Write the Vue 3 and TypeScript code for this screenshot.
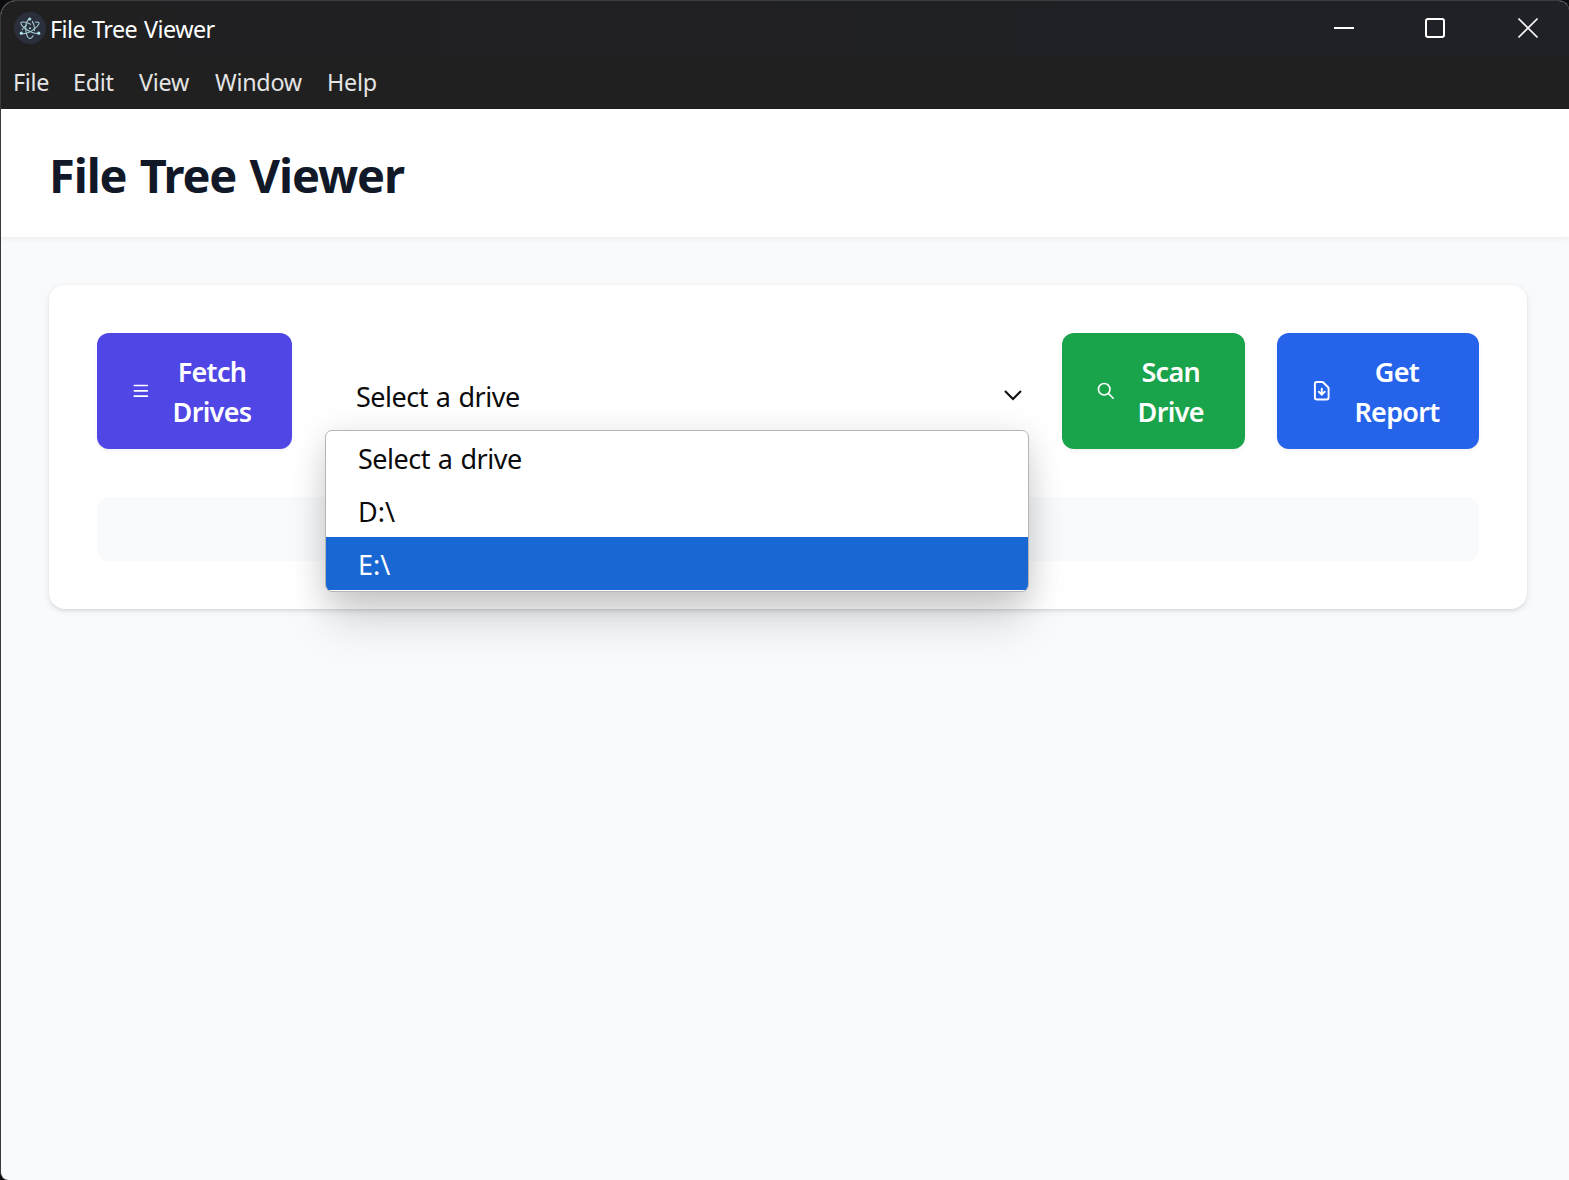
<script setup lang="ts">
import { ref } from 'vue'

const menus = ['File', 'Edit', 'View', 'Window', 'Help']
const options = ['Select a drive', 'D:\\', 'E:\\']
const selected = ref(options[0])
const highlighted = ref(2)
</script>

<template>
  <div class="window">
    <div class="titlebar">
      <svg class="app-icon" viewBox="0 0 32 32" width="32" height="32">
        <circle cx="16" cy="16" r="16" fill="#2b2e3b" />
        <g fill="none" stroke="#a4cfd8" stroke-width="1.05" stroke-linecap="round">
          <path d="M7.3 21.2C10 22.6 16 20.5 20 17.3C24 14 26.3 11 24.3 10.3C23.6 10 22.6 10 21.4 10.3" />
          <path d="M24.7 21.2C22 22.2 15 19.8 11 16.5C7.4 13.5 5.8 11 7.6 10.2C9.3 9.6 13 10.4 16.6 12.2" />
          <path d="M15.7 7C13 8 11.5 12.5 11.7 17C11.9 22 13.6 26.6 16 26.6C17.2 26.6 18.2 25.6 19 23.8" />
          <path d="M18.3 9.2C19.8 11.5 20.6 14.5 20.4 18.5" />
          <path d="M8.2 17.8C9 16 10.5 14.4 12.6 12.8" />
        </g>
        <g fill="#a9e0e8">
          <circle cx="16" cy="16.2" r="1" />
          <circle cx="15.7" cy="7" r="1.6" />
          <circle cx="7.3" cy="21.2" r="1.6" />
          <circle cx="24.7" cy="21.2" r="1.6" />
        </g>
      </svg>
      <span class="title">File Tree Viewer</span>
      <div class="controls">
        <svg width="20" height="20" viewBox="0 0 20 20"><path d="M0 10h20" stroke="#fff" stroke-width="2" /></svg>
        <svg width="20" height="20" viewBox="0 0 20 20"><rect x="1" y="1" width="18" height="18" rx="2" fill="none" stroke="#fff" stroke-width="2" /></svg>
        <svg width="20" height="20" viewBox="0 0 20 20"><path d="M.5.5l19 19M19.5.5l-19 19" stroke="#f2f2f2" stroke-width="1.6" /></svg>
      </div>
    </div>
    <nav class="menubar">
      <span v-for="m in menus" :key="m">{{ m }}</span>
    </nav>
    <header class="header"><h1>File Tree Viewer</h1></header>
    <main class="main">
      <section class="card">
        <div class="toolbar">
          <button class="btn fetch">
            <svg viewBox="0 0 24 24"><path d="M4 5.5h16M4 12h16M4 18.5h16" /></svg>
            <span>Fetch<br />Drives</span>
          </button>
          <div class="select">
            <div class="value">
              <span>{{ selected }}</span>
              <svg width="20" height="12" viewBox="0 0 20 12"><path d="M2 2l8 8 8-8" fill="none" stroke="#111" stroke-width="2.1" /></svg>
            </div>
            <ul class="popup">
              <li v-for="(o, i) in options" :key="o" :class="{ active: i === highlighted }">{{ o }}</li>
            </ul>
          </div>
          <button class="btn scan">
            <svg viewBox="0 0 24 24"><path d="M21 21l-6-6m2-5a7 7 0 11-14 0 7 7 0 0114 0z" /></svg>
            <span>Scan<br />Drive</span>
          </button>
          <button class="btn report">
            <svg viewBox="0 0 24 24"><path d="M12 10v6m0 0l-3-3m3 3l3-3m2 8H7a2 2 0 01-2-2V5a2 2 0 012-2h5.586a1 1 0 01.707.293l5.414 5.414a1 1 0 01.293.707V19a2 2 0 01-2 2z" /></svg>
            <span>Get<br />Report</span>
          </button>
        </div>
        <div class="tree"></div>
      </section>
    </main>
  </div>
</template>

<style>
body { background: #0c0c0e; }
</style>

<style scoped>
* { box-sizing: border-box; }
.window {
  width: 1569px;
  height: 1180px;
  display: flex;
  flex-direction: column;
  overflow: hidden;
  background: #f9fafc;
  border-top: 1px solid #3b3c3d;
  border-left: 1px solid #39393b;
  border-radius: 16px 10px 0 8px;
  font-family: "Noto Sans", "Open Sans", sans-serif;
  white-space: nowrap;
}
.titlebar {
  height: 56px;
  display: flex;
  align-items: center;
  background: linear-gradient(90deg, #202021, #202126 80%);
  padding-left: 13px;
  color: #fff;
}
.app-icon { display: block; margin-top: -2px; }
.title { font-size: 23.3px; letter-spacing: -0.5px; word-spacing: 1.2px; margin-left: 4px; line-height: 32px; }
.controls { margin-left: auto; display: flex; gap: 71px; padding-right: 31px; margin-top: -2px; }
.controls svg { display: block; }
.controls svg:last-child { margin-left: 2px; }
.menubar {
  height: 52px;
  background: #202020;
  color: #e4e4e4;
  display: grid;
  grid-template-columns: 60px 66px 76px 112px auto;
  padding-left: 12px;
  font-size: 23.3px;
  line-height: 50px;
  letter-spacing: -0.25px;
}
.header {
  height: 128px;
  background: #fff;
  box-shadow: 0 2px 4px rgba(0, 0, 0, 0.06);
  padding: 31px 48px;
  position: relative;
}
h1 { margin: 0; font-size: 47px; line-height: 70px; font-weight: 700; color: #111827; letter-spacing: -1.1px; word-spacing: 2.1px; }
.main { padding: 48px 42px 0 48px; }
.card {
  height: 324px;
  padding: 48px;
  background: #fff;
  border-radius: 16px;
  box-shadow: 0 2px 6px rgba(0, 0, 0, 0.1), 0 2px 4px -2px rgba(0, 0, 0, 0.12);
}
.toolbar { display: flex; height: 116px; }
.btn {
  display: flex;
  align-items: center;
  justify-content: space-between;
  border: 0;
  border-radius: 12px;
  padding: 0 32px 0 33.5px;
  color: #fff;
  font: 600 27px/40px "Noto Sans", "Open Sans", sans-serif;
  box-shadow: 0 2px 4px rgba(0, 0, 0, 0.05);
}
.btn svg { width: 19.7px; height: 19.7px; fill: none; stroke: #fff; stroke-width: 2; stroke-linecap: round; stroke-linejoin: round; flex: none; }
.btn span { text-align: center; display: flex; justify-content: center; letter-spacing: -0.7px; padding-top: 2px; }
.fetch { width: 195px; background: #4f46e5; }
.fetch span { width: 96px; }
.scan { width: 183px; background: #19a34a; }
.scan span { width: 84.6px; }
.report { width: 202px; background: #2563eb; margin-left: 32px; padding-left: 33px; }
.report span { width: 100px; }
.report svg { width: 23.5px; height: 23.5px; }
.select { flex: 1; margin: 0 33px; position: relative; font-size: 27px; color: #0b0b0b; letter-spacing: -0.5px; word-spacing: 1.4px; }
.value { display: flex; justify-content: space-between; align-items: center; height: 40px; margin-top: 43px; padding: 0 6px 0 31px; }
.value svg { margin-top: -2px; }
.popup {
  position: absolute;
  top: 97px;
  left: 0;
  width: 704px;
  height: 162px;
  margin: 0;
  padding: 0 0 1px;
  list-style: none;
  background: #fff;
  border: 1px solid #b5b5b5;
  border-radius: 7px;
  overflow: hidden;
  box-shadow: 0 36px 44px -4px rgba(0, 0, 0, 0.13), 0 6px 32px rgba(0, 0, 0, 0.15);
}
.popup li { height: 53px; line-height: 55px; padding-left: 32px; }
.popup li + li { letter-spacing: 0; }
.popup .active { background: #1967d2; color: #fff; }
.tree { margin-top: 48px; height: 64px; border-radius: 12px; background: #f9fafc; }
</style>
